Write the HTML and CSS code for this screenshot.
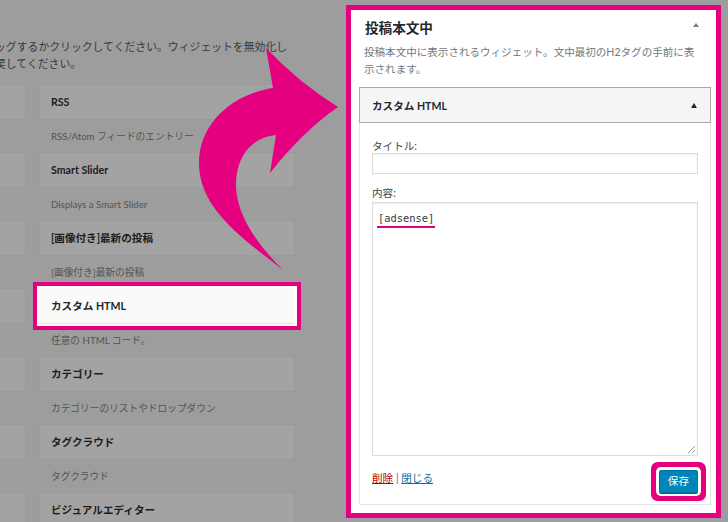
FILE: index.html
```html
<!DOCTYPE html>
<html lang="ja">
<head>
<meta charset="utf-8">
<title>ウィジェット</title>
<link rel="stylesheet" href="styles.css">
</head>
<body>
<div class="page">
  <div class="left">
    <p class="intro">ッグするかクリックしてください。ウィジェットを無効化し<br>戻してください。</p>
    <div class="grid">
      <div class="wg"><div class="w-box"></div><div class="w-desc"></div></div>
      <div class="wg"><div class="w-box">RSS</div><div class="w-desc">RSS/Atom フィードのエントリー</div></div>
      <div class="wg"><div class="w-box"></div><div class="w-desc"></div></div>
      <div class="wg"><div class="w-box">Smart Slider</div><div class="w-desc">Displays a Smart Slider</div></div>
      <div class="wg"><div class="w-box"></div><div class="w-desc"></div></div>
      <div class="wg"><div class="w-box">[画像付き]最新の投稿</div><div class="w-desc">[画像付き]最新の投稿</div></div>
      <div class="wg"><div class="w-box"></div><div class="w-desc"></div></div>
      <div class="wg"><div class="w-box hl">カスタム HTML</div><div class="w-desc">任意の HTML コード。</div></div>
      <div class="wg"><div class="w-box"></div><div class="w-desc"></div></div>
      <div class="wg"><div class="w-box">カテゴリー</div><div class="w-desc">カテゴリーのリストやドロップダウン</div></div>
      <div class="wg"><div class="w-box"></div><div class="w-desc"></div></div>
      <div class="wg"><div class="w-box">タグクラウド</div><div class="w-desc">タグクラウド</div></div>
      <div class="wg"><div class="w-box"></div><div class="w-desc"></div></div>
      <div class="wg"><div class="w-box">ビジュアルエディター</div><div class="w-desc"></div></div>
    </div>
  </div>

  <div class="sidebar">
    <div class="sb-head">
      <span class="sb-title">投稿本文中</span>
      <span class="tri-light"></span>
    </div>
    <p class="sb-desc">投稿本文中に表示されるウィジェット。文中最初のH2タグの手前に表<br>示されます。</p>
    <div class="widget">
      <div class="wt">
        <span class="wt-title">カスタム HTML</span>
        <span class="tri-dark"></span>
      </div>
      <div class="wi">
        <div class="lbl">タイトル:</div>
        <div class="inp"></div>
        <div class="lbl lbl2">内容:</div>
        <div class="ta">
          <span class="code">[adsense]</span>
          <svg class="grip" width="9" height="9" viewBox="0 0 9 9"><path d="M8 1 L1 8 M8 5 L5 8" stroke="#999" stroke-width="1" fill="none"/></svg>
        </div>
        <div class="wf">
          <div class="links"><span class="del">削除</span> | <span class="close">閉じる</span></div>
          <div class="btn">保存</div>
        </div>
      </div>
    </div>
  </div>
</div>

<svg class="arrow" width="728" height="522" viewBox="0 0 728 522">
  <path d="M283 270 C245 240 200 210 199 165 C198 124 232 94 273 88 L266 48 Q298 82 338 107 Q302 132 270 173 L276 135 C248 138 236 160 236 185 C236 215 258 245 283 270 Z" fill="#e4007f"/>
</svg>
</body>
</html>
```

FILE: styles.css
```css
html, body {
  margin: 0;
  padding: 0;
}

body {
  width: 728px;
  height: 522px;
  overflow: hidden;
  position: relative;
  background: #9d9d9d;
  font-family: "Lato", "Noto Sans CJK JP", sans-serif;
}

.page {
  display: flex;
  align-items: flex-start;
}

/* left, dimmed widget list */
.left {
  width: 346px;
  height: 522px;
  flex: none;
  box-sizing: border-box;
  padding-top: 38px;
  overflow: hidden;
}

.intro {
  margin: 0 0 12px -5px;
  font-size: 10.85px;
  line-height: 17px;
  color: #383838;
  white-space: nowrap;
}

.grid {
  display: grid;
  grid-template-columns: 256px 256px;
  column-gap: 13px;
  margin-left: -230px;
}

.w-box {
  height: 36px;
  box-sizing: border-box;
  border: 1px solid #9a9a9a;
  background: #a3a3a3;
  padding-left: 11px;
  font-size: 10.6px;
  font-weight: 700;
  line-height: 34px;
  color: #1c1c1c;
  white-space: nowrap;
}

.w-box.hl {
  background: #fafafa;
  border-color: #fafafa #fafafa #e2e2e2 #fafafa;
  color: #23282d;
  box-shadow: 0 0 0 2px #fff, 0 0 0 6px #e4007f;
}

.w-desc {
  height: 17px;
  padding: 8px 0 7px 12px;
  font-size: 9.7px;
  line-height: 17px;
  color: #545454;
  white-space: nowrap;
}

/* right sidebar panel */
.sidebar {
  width: 375px;
  height: 513px;
  margin-top: 5px;
  flex: none;
  box-sizing: border-box;
  border: 5px solid #e4007f;
  background: #fff;
}

.sb-head {
  display: flex;
  justify-content: space-between;
  align-items: flex-start;
  height: 20px;
  padding: 8px 17px 0 14px;
}

.sb-title {
  font-size: 13.6px;
  font-weight: 700;
  line-height: 20px;
  color: #23282d;
}

.tri-light {
  margin-top: 5px;
  width: 0;
  height: 0;
  border-left: 3px solid transparent;
  border-right: 3px solid transparent;
  border-bottom: 4px solid #7a7e83;
}

.sb-desc {
  margin: 5.5px 0 0 13px;
  font-size: 10.55px;
  line-height: 17px;
  color: #72777c;
  white-space: nowrap;
}

.widget {
  margin: 9.5px 5px 0 8px;
}

.wt {
  height: 36px;
  box-sizing: border-box;
  border: 1px solid #a9a9a9;
  background: #f5f5f5;
  display: flex;
  justify-content: space-between;
  align-items: center;
  padding: 0 13px 0 12px;
}

.wt-title {
  font-size: 10.6px;
  font-weight: 700;
  color: #23282d;
}

.tri-dark {
  width: 0;
  height: 0;
  border-left: 3px solid transparent;
  border-right: 3px solid transparent;
  border-bottom: 5px solid #23282d;
}

.wi {
  border: 1px solid #e5e5e5;
  border-top: 0;
  padding: 16px 12px 11px;
}

.lbl {
  font-size: 10.6px;
  line-height: 14px;
  color: #444;
}

.lbl2 {
  margin-top: 12px;
}

.inp {
  height: 21px;
  box-sizing: border-box;
  border: 1px solid #ddd;
  box-shadow: inset 0 1px 2px rgba(0, 0, 0, 0.07);
}

.ta {
  position: relative;
  margin-top: 2px;
  height: 254px;
  box-sizing: border-box;
  border: 1px solid #ddd;
  box-shadow: inset 0 1px 2px rgba(0, 0, 0, 0.07);
  padding: 3px 5px;
}

.code {
  display: inline-block;
  margin-left: -1px;
  padding: 0 1px;
  font-family: "DejaVu Sans Mono", monospace;
  font-size: 10.4px;
  line-height: 16px;
  color: #32373c;
  border-bottom: 2px solid #e4007f;
}

.grip {
  position: absolute;
  right: 1px;
  bottom: 1px;
}

.wf {
  display: flex;
  justify-content: space-between;
  align-items: flex-start;
  margin-top: 14px;
}

.links {
  font-size: 10.6px;
  line-height: 17px;
  color: #666;
}

.del {
  color: #a00;
  text-decoration: underline;
}

.close {
  color: #0073aa;
  text-decoration: underline;
}

.btn {
  height: 23px;
  box-sizing: border-box;
  padding: 0 8px;
  background: #0085ba;
  border: 1px solid #0073aa;
  border-radius: 2px;
  color: #fff;
  font-size: 10.6px;
  line-height: 21px;
  box-shadow: 0 1px 0 #006799, 0 0 0 3px #fff, 0 0 0 8px #e4007f;
}

/* decorative arrow overlay */
.arrow {
  position: absolute;
  left: 0;
  top: 0;
  pointer-events: none;
}
```
